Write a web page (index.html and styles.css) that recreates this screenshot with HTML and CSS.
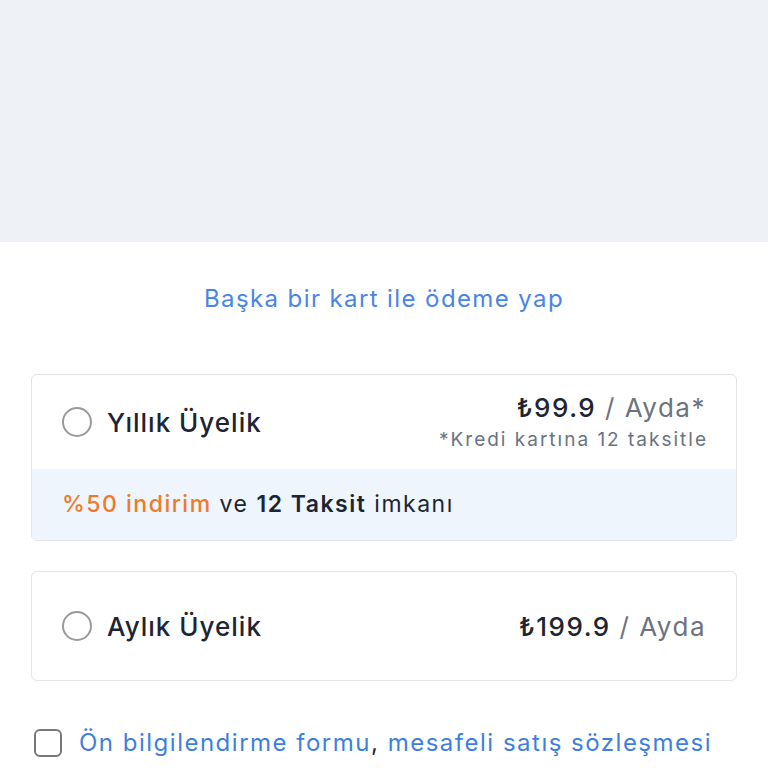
FILE: index.html
```html
<!DOCTYPE html>
<html lang="tr">
<head>
  <meta charset="UTF-8">
  <meta name="viewport" content="width=device-width, initial-scale=1.0">
  <title>Üyelik Seçimi</title>
  <link rel="stylesheet" href="styles.css">
</head>
<body>
  <div class="top-area"></div>
  <div class="content">
    <a class="other-card" href="#">Başka bir kart ile ödeme yap</a>

    <div class="plan">
      <div class="plan-main">
        <span class="radio"></span>
        <span class="plan-name">Yıllık Üyelik</span>
        <div class="plan-price">
          <div class="price"><b>₺99.9</b> / Ayda*</div>
          <div class="price-note">*Kredi kartına 12 taksitle</div>
        </div>
      </div>
      <div class="plan-extra">
        <span class="discount">%50 indirim</span> ve <b>12 Taksit</b> imkanı
      </div>
    </div>

    <div class="plan">
      <div class="plan-main tall">
        <span class="radio"></span>
        <span class="plan-name">Aylık Üyelik</span>
        <div class="plan-price">
          <div class="price"><b>₺199.9</b> / Ayda</div>
        </div>
      </div>
    </div>

    <label class="agree">
      <span class="checkbox"></span>
      <span><a href="#">Ön bilgilendirme formu</a>, <a href="#">mesafeli satış sözleşmesi</a></span>
    </label>
  </div>
</body>
</html>
```

FILE: styles.css
```css
body {
  margin: 0;
  font-family: Inter, "Open Sans", sans-serif;
  background: #fff;
  color: #1d2433;
}
.top-area {
  height: 242px;
  background: #eef1f6;
}
.content {
  padding: 0 31px;
  display: flex;
  flex-direction: column;
}
.other-card {
  align-self: center;
  margin-top: 42px;
  font-size: 24px;
  letter-spacing: 1.4px;
  color: #4a85e6;
  text-decoration: none;
  line-height: 30px;
}
.plan {
  margin-top: 60px;
  border: 1px solid #e2e4e8;
  border-radius: 6px;
  overflow: hidden;
}
.plan + .plan {
  margin-top: 30px;
}
.plan-main {
  display: flex;
  align-items: center;
  height: 94px;
  padding: 0 30px 0 30px;
}
.plan-main.tall {
  height: 108px;
}
.radio {
  width: 26px;
  height: 26px;
  border: 2px solid #9a9a9a;
  border-radius: 50%;
  flex-shrink: 0;
}
.plan-name {
  margin-left: 15px;
  font-size: 26px;
  font-weight: 500;
  letter-spacing: 1px;
  color: #1d2433;
}
.plan-price {
  margin-left: auto;
  text-align: right;
  padding-top: 4px;
}
.price {
  font-size: 26px;
  letter-spacing: 1.5px;
  color: #6b7280;
  line-height: 30px;
  margin-top: -2px;
}
.price b {
  font-weight: 500;
  color: #1d2433;
}
.price-note {
  font-size: 19px;
  color: #6b7280;
  letter-spacing: 2px;
  line-height: 28px;
  margin-top: 3px;
  margin-right: -2px;
}
.plan-extra {
  background: #eef5fd;
  height: 71px;
  line-height: 71px;
  padding-left: 30px;
  font-size: 23px;
  letter-spacing: 1.5px;
}
.plan-extra b {
  font-weight: 600;
}
.discount {
  color: #f07a2a;
  font-weight: 500;
}
.agree {
  display: flex;
  align-items: center;
  margin-top: 47px;
  margin-left: 3px;
  font-size: 24px;
  letter-spacing: 1.5px;
}
.checkbox {
  width: 24px;
  height: 24px;
  border: 2px solid #777;
  border-radius: 6px;
  margin-right: 17px;
  flex-shrink: 0;
}
.agree a {
  color: #3d7fe0;
  text-decoration: none;
}
```
